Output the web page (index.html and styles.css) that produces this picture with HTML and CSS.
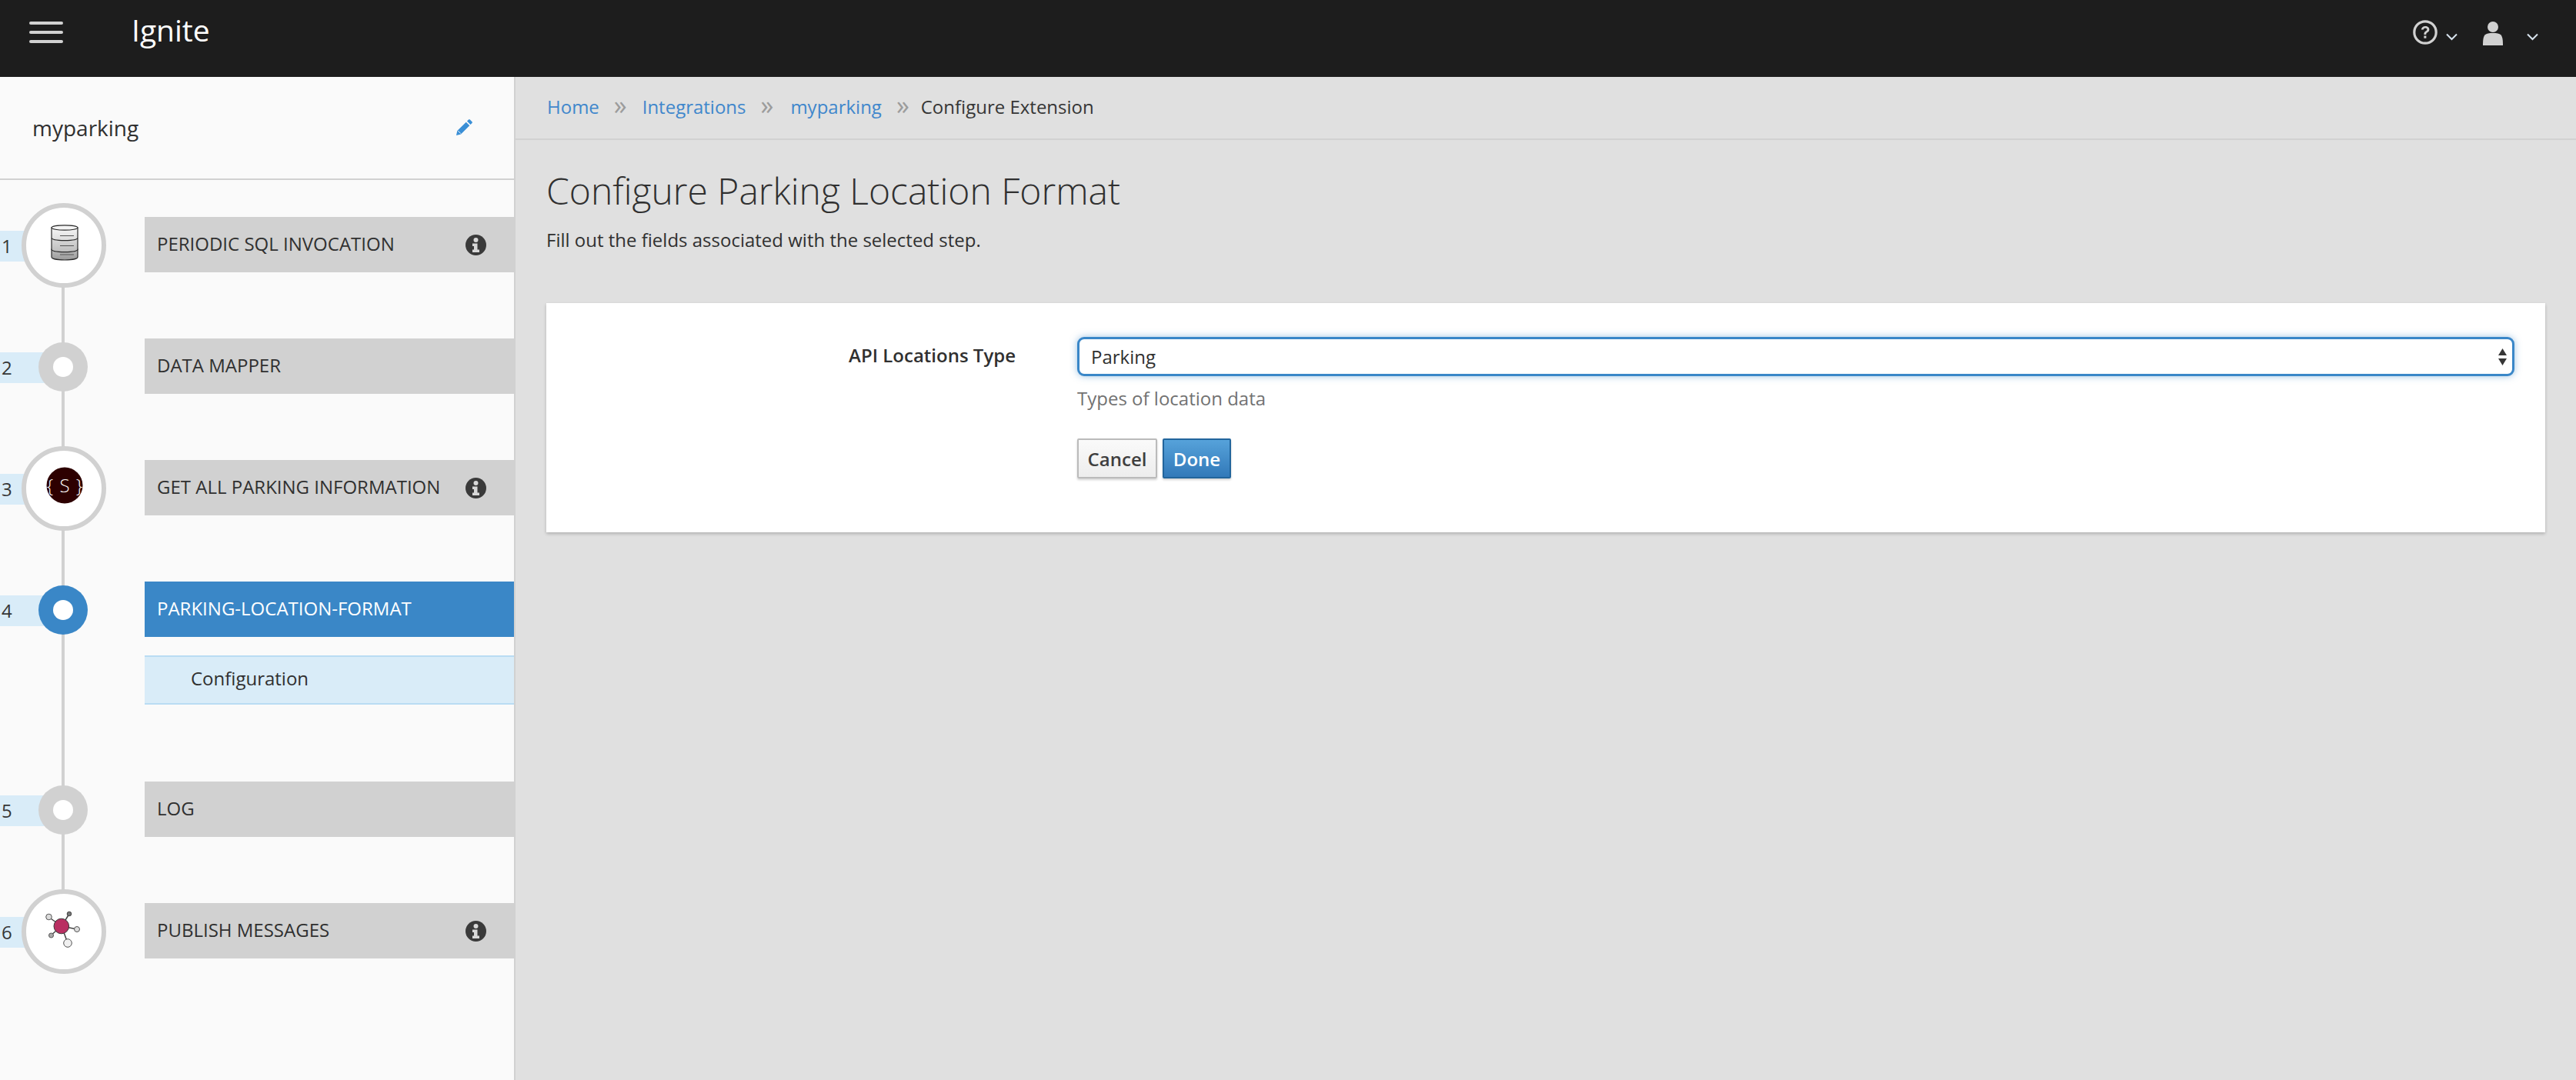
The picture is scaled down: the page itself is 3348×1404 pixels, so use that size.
FILE: index.html
```html
<!DOCTYPE html>
<html lang="en">
<head>
<meta charset="utf-8">
<title>Ignite</title>
<link rel="stylesheet" href="styles.css">
</head>
<body>
<header class="topbar">
  <button class="hamburger" aria-label="Menu"><span></span><span></span><span></span></button>
  <div class="brand">Ignite</div>
  <div class="top-tools">
    <svg class="help-icon" viewBox="0 0 32 32"><circle cx="16" cy="16" r="14.2" fill="none" stroke="#d1d1d1" stroke-width="3.2"/><path d="M10.8 12.6c.3-3 2.5-4.7 5.4-4.7 3 0 5.2 1.8 5.2 4.4 0 2-1 3-2.6 4-1.2.8-1.5 1.3-1.5 2.6h-2.9c0-2.3.6-3.2 2.3-4.4 1.2-.8 1.7-1.3 1.7-2.2 0-1.1-.9-1.8-2.2-1.8-1.400 0-2.200.8-2.400 2.100z" fill="#d1d1d1"/><rect x="14.400" y="20.500" width="3" height="3.200" fill="#d1d1d1"/></svg>
    <svg class="chev chev-help" viewBox="0 0 15 10"><path d="M1 1.500l6.500 6.500 6.500-6.500" fill="none" stroke="#d8e4ee" stroke-width="2"/></svg>
    <svg class="user-icon" viewBox="0 0 26 31"><circle cx="13" cy="7" r="7" fill="#d1d1d1"/><path d="M0 31c0-7 .5-11 2.500-13.500C4.500 15.500 8 15 13 15s8.500.5 10.500 2.500C25.500 20 26 24 26 31z" fill="#d1d1d1"/></svg>
    <svg class="chev chev-user" viewBox="0 0 15 10"><path d="M1 1.500l6.500 6.500 6.500-6.500" fill="none" stroke="#d8e4ee" stroke-width="2"/></svg>
  </div>
</header>

<div class="shell">
  <aside class="sidebar">
    <div class="integration-name">
      <span>myparking</span>
      <svg class="pencil" viewBox="0 0 21 21"><path d="M16 0.500c.6-.5 1.300-.5 1.800 0l2.700 2.700c.5.500.5 1.200 0 1.800l-2 2-4.500-4.500zM12.800 3.700l4.500 4.500L6 19.500 0 21l1.300-6z" fill="#3a8fd6"/><path d="M2.400 15.200l3.400 3.400" stroke="#fafafa" stroke-width="1" fill="none"/></svg>
    </div>
    <ol class="steps">
      <li class="step">
        <div class="marker">
          <span class="num">1</span>
          <span class="ring large">
            <svg class="db" viewBox="0 0 36 47">
              <defs>
                <linearGradient id="t1" x1="0" x2="0" y1="0" y2="1"><stop offset="0" stop-color="#f6f6f6"/><stop offset="1" stop-color="#dcdcdc"/></linearGradient>
                <linearGradient id="t2" x1="0" x2="0" y1="0" y2="1"><stop offset="0" stop-color="#d9d9d9"/><stop offset="1" stop-color="#bdbdbd"/></linearGradient>
                <linearGradient id="t3" x1="0" x2="0" y1="0" y2="1"><stop offset="0" stop-color="#bdbdbd"/><stop offset="1" stop-color="#9a9a9a"/></linearGradient>
              </defs>
              <path d="M1 32v10c0 2.500 7.500 4 17 4s17-1.500 17-4V32z" fill="url(#t3)" stroke="#2a2a2a" stroke-width="1.200"/>
              <path d="M1 18v14c0 2.500 7.500 3.600 17 3.600s17-1.100 17-3.600V18z" fill="url(#t2)" stroke="#2a2a2a" stroke-width="1.200"/>
              <path d="M1 4v13c0 2.500 7.500 3.600 17 3.600s17-1.100 17-3.600V4z" fill="url(#t1)" stroke="#2a2a2a" stroke-width="1.200"/>
              <ellipse cx="18" cy="4" rx="17" ry="3.200" fill="#f4f4f4" stroke="#2a2a2a" stroke-width="1.200"/>
              <path d="M12 27.500h18M12 39h18M12 14.500h18" stroke="#555" stroke-width="1" fill="none"/>
            </svg>
          </span>
        </div>
        <div class="step-body">
          <div class="bar"><span>PERIODIC SQL INVOCATION</span>
            <svg class="info" viewBox="0 0 27 27"><circle cx="13.500" cy="13.500" r="13.500" fill="#3a3a3a"/><circle cx="13.500" cy="7" r="3" fill="#d8d8d8"/><path d="M9 11.500h6.500v8H18v3.500H9v-3.500h2v-4.500H9z" fill="#d8d8d8"/></svg>
          </div>
        </div>
      </li>
      <li class="step">
        <div class="marker"><span class="num">2</span><span class="ring small"><i></i></span></div>
        <div class="step-body"><div class="bar"><span>DATA MAPPER</span></div></div>
      </li>
      <li class="step">
        <div class="marker">
          <span class="num">3</span>
          <span class="ring large">
            <svg class="swagger" viewBox="0 0 50 50"><circle cx="25" cy="24" r="23.500" fill="#2d0000"/><text x="25.500" y="33" text-anchor="middle" class="swagger-text">{ S }</text></svg>
          </span>
        </div>
        <div class="step-body">
          <div class="bar"><span>GET ALL PARKING INFORMATION</span>
            <svg class="info" viewBox="0 0 27 27"><circle cx="13.500" cy="13.500" r="13.500" fill="#3a3a3a"/><circle cx="13.500" cy="7" r="3" fill="#d8d8d8"/><path d="M9 11.500h6.500v8H18v3.500H9v-3.500h2v-4.500H9z" fill="#d8d8d8"/></svg>
          </div>
        </div>
      </li>
      <li class="step step-current">
        <div class="marker"><span class="num">4</span><span class="ring small active"><i></i></span></div>
        <div class="step-body">
          <div class="bar active"><span>PARKING-LOCATION-FORMAT</span></div>
          <div class="substep">Configuration</div>
        </div>
      </li>
      <li class="step">
        <div class="marker"><span class="num">5</span><span class="ring small"><i></i></span></div>
        <div class="step-body"><div class="bar"><span>LOG</span></div></div>
      </li>
      <li class="step">
        <div class="marker">
          <span class="num">6</span>
          <span class="ring large">
            <svg class="hub" viewBox="0 0 48 48">
              <path d="M21 20L4 8M21 20L31 4M21 20L41 24M21 20L7 32M21 20L29 42" stroke="#444" stroke-width="1.500" fill="none"/>
              <circle cx="4.500" cy="8" r="3.800" fill="#dcdcdc" stroke="#555" stroke-width="1"/>
              <circle cx="31" cy="4" r="2.800" fill="#777" stroke="#444" stroke-width="1"/>
              <circle cx="41" cy="24" r="3.500" fill="#dcdcdc" stroke="#555" stroke-width="1"/>
              <circle cx="7.500" cy="32" r="3" fill="#aaa" stroke="#555" stroke-width="1"/>
              <circle cx="29" cy="42" r="5.300" fill="#f0f0f0" stroke="#555" stroke-width="1"/>
              <circle cx="20.800" cy="20" r="9.800" fill="#b92f62" stroke="#3a3a3a" stroke-width="1"/>
            </svg>
          </span>
        </div>
        <div class="step-body">
          <div class="bar"><span>PUBLISH MESSAGES</span>
            <svg class="info" viewBox="0 0 27 27"><circle cx="13.500" cy="13.500" r="13.500" fill="#3a3a3a"/><circle cx="13.500" cy="7" r="3" fill="#d8d8d8"/><path d="M9 11.500h6.500v8H18v3.500H9v-3.500h2v-4.500H9z" fill="#d8d8d8"/></svg>
          </div>
        </div>
      </li>
    </ol>
  </aside>

  <main class="content">
    <nav class="crumbs">
      <a href="#">Home</a><span class="sep first">»</span>
      <a href="#">Integrations</a><span class="sep">»</span>
      <a href="#">myparking</a><span class="sep last">»</span>
      <span class="current">Configure Extension</span>
    </nav>
    <div class="page-head">
      <h1>Configure Parking Location Format</h1>
      <p>Fill out the fields associated with the selected step.</p>
    </div>
    <form class="card">
      <label class="field-label" for="loc">API Locations Type</label>
      <div class="field">
        <div class="select-wrap">
          <select id="loc" class="select"><option>Parking</option></select>
          <svg class="select-arrows" viewBox="0 0 11 22"><path d="M5.500 0L11 9H0zM0 13h11l-5.500 9z" fill="#363636"/></svg>
        </div>
        <div class="hint">Types of location data</div>
        <div class="actions">
          <button type="button" class="btn btn-default">Cancel</button>
          <button type="button" class="btn btn-primary">Done</button>
        </div>
      </div>
    </form>
  </main>
</div>
</body>
</html>
```

FILE: styles.css
```css
* { box-sizing: border-box; }
html, body { margin: 0; height: 100%; }
body {
  font-family: "Open Sans", "Liberation Sans", sans-serif;
  font-size: 24px;
  color: #363636;
  background: #e0e0e0;
  display: flex;
  flex-direction: column;
  overflow: hidden;
}

/* top bar */
.topbar {
  height: 100px;
  flex: none;
  background: #1d1d1d;
  display: flex;
  align-items: flex-start;
  padding-left: 38px;
  padding-right: 49px;
}
.hamburger {
  width: 44px;
  margin: 28px 0 0;
  padding: 0;
  border: 0;
  background: none;
  display: flex;
  flex-direction: column;
  gap: 8px;
}
.hamburger span {
  height: 4px;
  background: #d1d1d1;
  border-radius: 2px;
}
.brand {
  margin: 14px 0 0 89px;
  color: #fff;
  font-size: 39px;
  line-height: 50px;
}
.top-tools {
  margin-left: auto;
  display: flex;
  align-items: flex-start;
}
.help-icon { width: 32px; height: 32px; margin-top: 26px; }
.chev { width: 15px; height: 10px; margin-top: 43px; }
.chev-help { margin-left: 11px; }
.user-icon { width: 26px; height: 31px; margin: 28px 0 0 33px; }
.chev-user { margin-left: 31px; }

/* shell */
.shell { flex: 1; display: flex; min-height: 0; }

/* sidebar */
.sidebar {
  width: 670px;
  flex: none;
  background: #fafafa;
  border-right: 2px solid #d1d1d1;
}
.integration-name {
  height: 134px;
  border-bottom: 2px solid #d1d1d1;
  padding: 0 54px 0 42px;
  display: flex;
  align-items: center;
  justify-content: space-between;
  font-size: 28px;
  color: #303030;
}
.pencil { width: 21px; height: 21px; margin-top: -1px; }

.steps {
  list-style: none;
  margin: 48px 0 0;
  padding: 0;
  position: relative;
}
.steps::before {
  content: "";
  position: absolute;
  left: 80px;
  top: 36px;
  height: 892px;
  width: 4px;
  background: #d1d1d1;
}
.step {
  display: flex;
  margin-bottom: 86px;
  position: relative;
}
.step-current { margin-bottom: 100px; }
.marker {
  width: 188px;
  height: 72px;
  flex: none;
  display: grid;
  grid-template-rows: 72px;
  align-items: center;
  justify-items: start;
}
.num {
  grid-area: 1 / 1;
  width: 60px;
  height: 40px;
  margin-top: 4px;
  padding-left: 2px;
  background: #d9ecf8;
  line-height: 40px;
  color: #363636;
}
.ring {
  grid-area: 1 / 1;
  border-radius: 50%;
  display: flex;
  align-items: center;
  justify-content: center;
  z-index: 1;
}
.ring.large {
  width: 110px;
  height: 110px;
  margin: 1px 0 0 28px;
  background: #fff;
  border: 6px solid #d1d1d1;
  padding-bottom: 6px;
}
.ring.small {
  width: 64px;
  height: 64px;
  margin: 2px 0 0 50px;
  background: #d1d1d1;
}
.ring.small.active { background: #3a87c7; }
.ring i {
  width: 26px;
  height: 26px;
  border-radius: 50%;
  background: #fff;
}
.db { width: 36px; height: 47px; margin-left: 2px; }
.swagger { width: 50px; height: 50px; margin-left: 2px; }
.swagger-text {
  font-family: "Open Sans", sans-serif;
  font-weight: 300;
  font-size: 24px;
  letter-spacing: 1px;
  fill: #fff;
}
.hub { width: 48px; height: 48px; }

.step-body { flex: 1; min-width: 0; }
.bar {
  height: 72px;
  background: #d1d1d1;
  padding: 0 36px 0 16px;
  display: flex;
  align-items: center;
  justify-content: space-between;
  color: #303030;
  font-size: 24px;
}
.bar > span { margin-top: -4px; }
.bar.active { background: #3a87c7; color: #fff; font-weight: 500; }
.info { width: 27px; height: 27px; margin-top: 1px; }
.substep {
  margin-top: 24px;
  height: 64px;
  padding-left: 60px;
  background: #d9ecf8;
  border-top: 2px solid #b9dcf3;
  border-bottom: 2px solid #b9dcf3;
  line-height: 56px;
  color: #303030;
}

/* content */
.content { flex: 1; min-width: 0; }
.crumbs {
  height: 82px;
  border-bottom: 2px solid #d1d1d1;
  padding: 0 0 4px 41px;
  display: flex;
  align-items: center;
}
.crumbs a { color: #3f87cc; text-decoration: none; }
.crumbs .sep { color: #9c9c9c; font-size: 34px; line-height: 33px; margin: -4px 22px 0 19px; }
.crumbs .sep.first { margin-right: 20px; }
.crumbs .sep.last { margin-right: 15px; }
.crumbs .current { color: #363636; }
.page-head { padding: 34px 0 0 40px; }
.page-head h1 {
  margin: 0;
  font-weight: 300;
  font-size: 48px;
  line-height: 64px;
  color: #303030;
}
.page-head p {
  margin: 15px 0 0;
  font-size: 24px;
  line-height: 33px;
  color: #303030;
}
.card {
  margin: 66px 40px 0 40px;
  height: 298px;
  background: #fff;
  box-shadow: 0 2px 4px rgba(0, 0, 0, .22);
  padding-top: 44px;
  display: flex;
  align-items: flex-start;
}
.field-label {
  width: 610px;
  text-align: right;
  font-weight: 600;
  line-height: 47px;
  color: #303030;
}
.field { margin-left: 80px; width: 1868px; }
.select-wrap { position: relative; }
.select {
  display: block;
  width: 100%;
  height: 51px;
  appearance: none;
  -webkit-appearance: none;
  background: #fff;
  border: 3px solid #3a87c8;
  border-radius: 9px;
  box-shadow: 0 0 10px rgba(58, 135, 200, .5);
  outline: none;
  padding: 0 15px;
  font: inherit;
  color: #303030;
}
.select-arrows {
  position: absolute;
  right: 10px;
  top: 15px;
  width: 11px;
  height: 22px;
  pointer-events: none;
}
.hint { margin-top: 12px; line-height: 33px; color: #727272; }
.actions { margin-top: 36px; display: flex; gap: 7px; }
.btn {
  height: 52px;
  font: inherit;
  font-weight: 600;
  border-radius: 2px;
  padding: 0;
  box-shadow: 0 2px 3px rgba(0, 0, 0, .18);
}
.btn-default {
  width: 104px;
  color: #3f3f3f;
  border: 2px solid #bbb;
  background: linear-gradient(#fafafa, #ededed);
}
.btn-primary {
  width: 89px;
  color: #fff;
  border: 2px solid #22659c;
  background: linear-gradient(#56a2da, #3279b9);
}
```
